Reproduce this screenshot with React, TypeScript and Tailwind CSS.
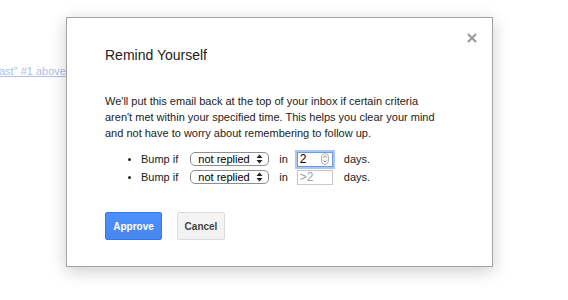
import React from "react";

function Arrows() {
  return (
    <svg width="7" height="10" viewBox="0 0 7 10" className="shrink-0">
      <path d="M3.5 0.5 L6.5 4 L0.5 4 Z" fill="#222" />
      <path d="M3.5 9.5 L6.5 6 L0.5 6 Z" fill="#222" />
    </svg>
  );
}

function FakeSelect() {
  return (
    <span className="flex h-[14px] w-[79px] items-center justify-between whitespace-nowrap rounded-[5px] border border-[#8e8e8e] bg-white pl-[7px] pr-[5px] text-[11px] leading-none text-black">
      not replied
      <Arrows />
    </span>
  );
}

function Spinner() {
  return (
    <svg width="8" height="12" viewBox="0 0 8 12" className="shrink-0">
      <rect x="0.5" y="0.5" width="7" height="11" rx="3.5" fill="#fafafa" stroke="#b5b5b5" />
      <path d="M2.3 4.6 L4 2.8 L5.7 4.6" fill="none" stroke="#777" strokeWidth="0.9" />
      <path d="M2.3 7.4 L4 9.2 L5.7 7.4" fill="none" stroke="#777" strokeWidth="0.9" />
    </svg>
  );
}

function Row({ focused }: { focused?: boolean }) {
  return (
    <div className="flex h-[18px] items-center whitespace-nowrap text-[11px] text-[#222]">
      <span className="ml-[23px] h-[3px] w-[3px] rounded-full bg-[#222]" />
      <span className="ml-[10px]">Bump if</span>
      <span className="ml-[12px]">
        <FakeSelect />
      </span>
      <span className="ml-[10px]">in</span>
      {focused ? (
        <span className="ml-[9px] flex h-[15px] w-[36px] items-center justify-between border border-[#6b9be8] bg-white pl-[2px] pr-[3px] text-[12px] text-black shadow-[0_0_0_2px_#a9c6f5]">
          <span className="leading-none">2</span>
          <Spinner />
        </span>
      ) : (
        <span className="ml-[9px] flex h-[15px] w-[36px] items-center border border-[#c8c8c8] bg-white pl-[2px] text-[12px] text-[#a0a0a0]">
          <span className="leading-none">&gt;2</span>
        </span>
      )}
      <span className="ml-[11px]">days.</span>
    </div>
  );
}

export default function App() {
  return (
    <div
      className="relative h-[300px] w-[568px] overflow-hidden bg-white"
      style={{ fontFamily: '"Liberation Sans", Arial, sans-serif' }}
    >
      <div className="whitespace-nowrap pt-[63px] text-[11px] leading-[16px]">
        <span className="-ml-[1px] text-[#aebdec] underline">ast" #1 above the rest</span>
      </div>

      <div className="absolute left-[66px] top-[17px] h-[250px] w-[427px] border border-[#a3a3a3] bg-white pl-[38px] pt-[28px] shadow-[0_4px_16px_rgba(0,0,0,0.2)]">
        <button className="absolute right-[15px] top-[15px] p-0">
          <svg width="10" height="10" viewBox="0 0 10 10">
            <path d="M1 1 L9 9 M9 1 L1 9" stroke="#9a9a9a" strokeWidth="2.2" />
          </svg>
        </button>
        <h2 className="text-[14px] leading-[18px] text-[#222]">Remind Yourself</h2>
        <p className="mt-[29px] w-[335px] text-[11px] leading-[16px] text-[#222]">
          We'll put this email back at the top of your inbox if certain criteria aren't met within
          your specified time. This helps you clear your mind and not have to worry about
          remembering to follow up.
        </p>
        <div className="mt-[9px] flex flex-col">
          <Row focused />
          <Row />
        </div>
        <div className="mt-[26px] flex gap-[15px]">
          <button className="h-[28px] w-[57px] rounded-[2px] border border-[#3079ed] bg-gradient-to-b from-[#4d90fe] to-[#4787ed] text-[10px] font-bold text-white">
            Approve
          </button>
          <button className="h-[28px] w-[48px] rounded-[2px] border border-[#dcdcdc] bg-gradient-to-b from-[#f5f5f5] to-[#f1f1f1] text-[10px] font-bold text-[#444]">
            Cancel
          </button>
        </div>
      </div>
    </div>
  );
}
